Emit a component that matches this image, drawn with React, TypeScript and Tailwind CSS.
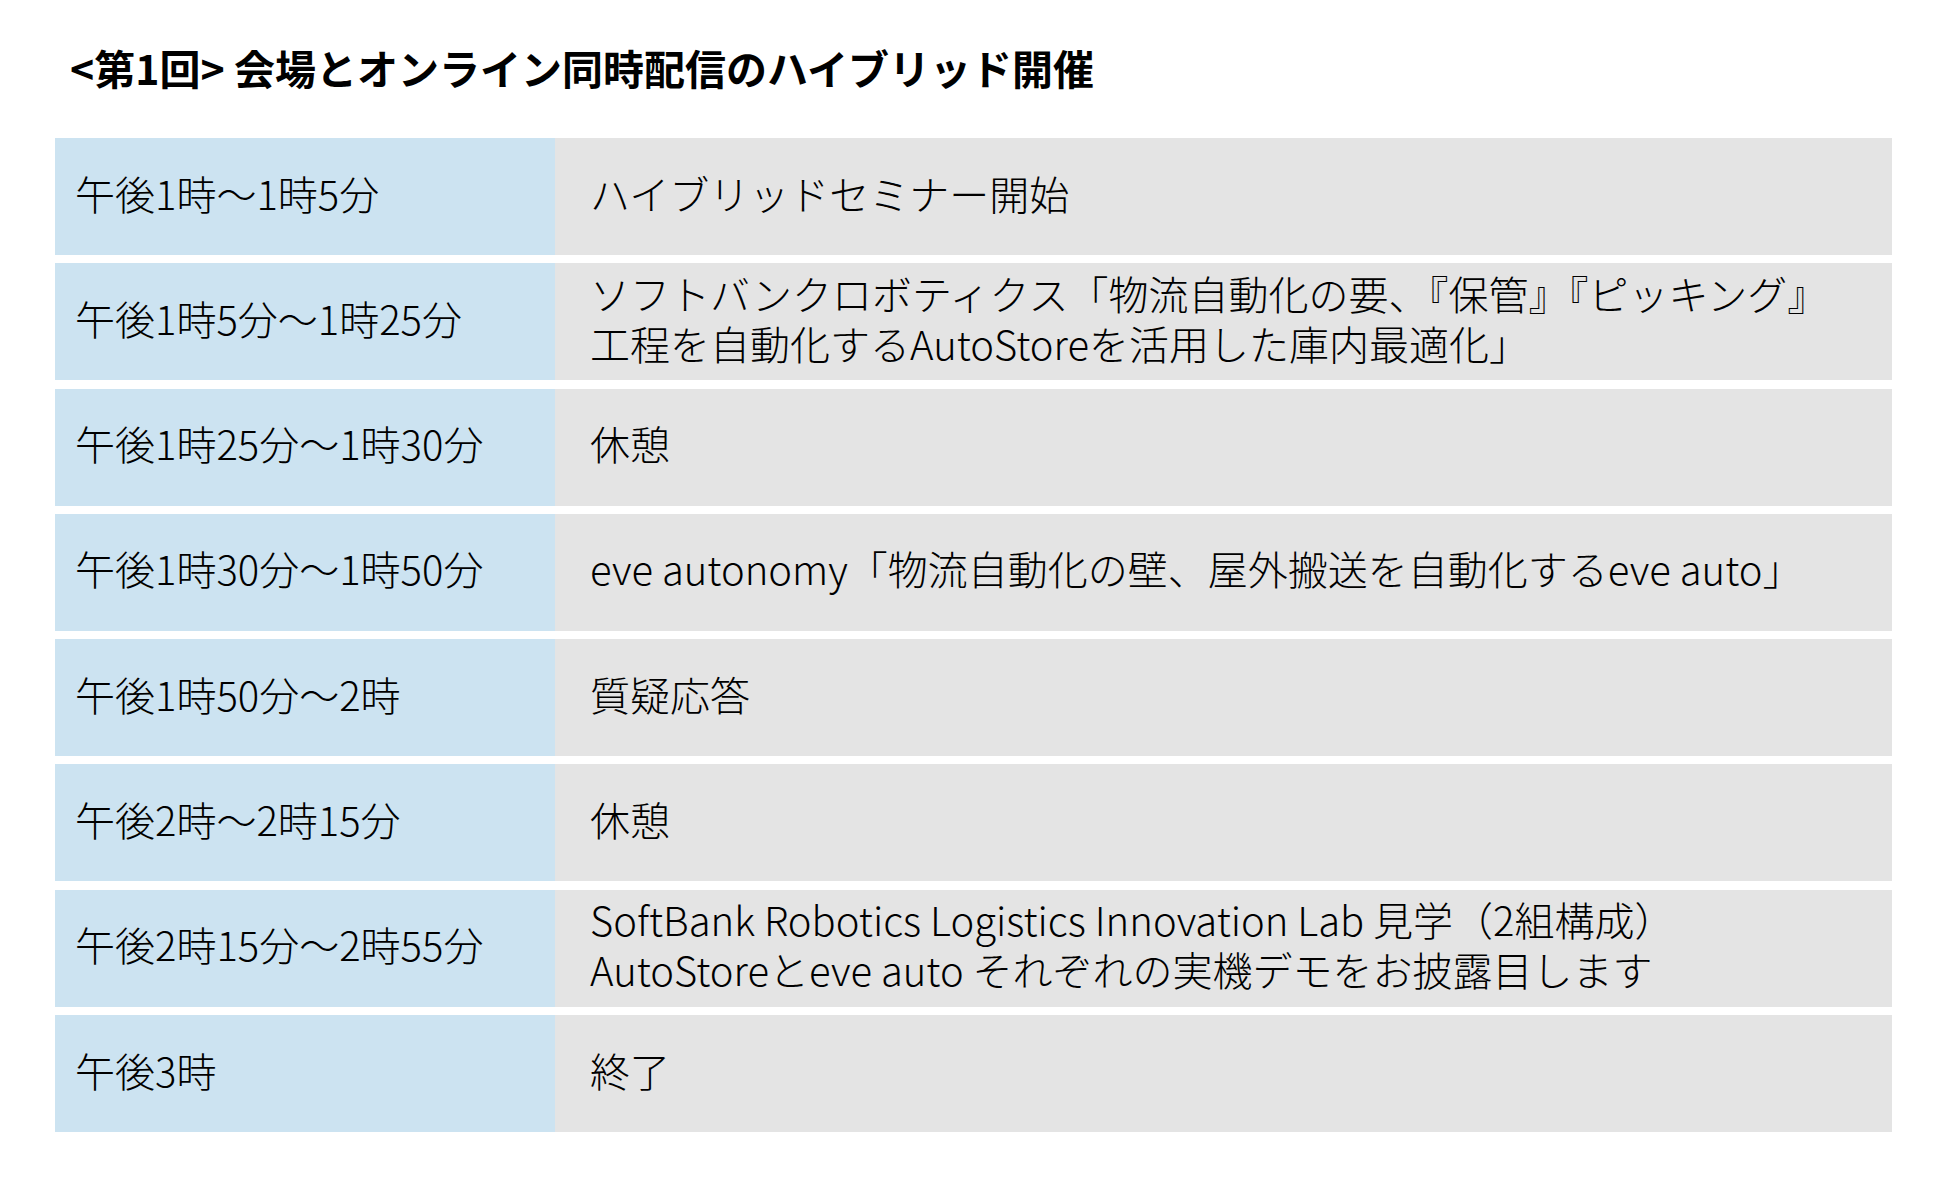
import React from 'react'

const rows: { time: string; lines: string[] }[] = [
  { time: '午後1時〜1時5分', lines: ['ハイブリッドセミナー開始'] },
  {
    time: '午後1時5分〜1時25分',
    lines: [
      'ソフトバンクロボティクス「物流自動化の要、『保管』『ピッキング』',
      '工程を自動化するAutoStoreを活用した庫内最適化」',
    ],
  },
  { time: '午後1時25分〜1時30分', lines: ['休憩'] },
  {
    time: '午後1時30分〜1時50分',
    lines: ['eve autonomy「物流自動化の壁、屋外搬送を自動化するeve auto」'],
  },
  { time: '午後1時50分〜2時', lines: ['質疑応答'] },
  { time: '午後2時〜2時15分', lines: ['休憩'] },
  {
    time: '午後2時15分〜2時55分',
    lines: [
      'SoftBank Robotics Logistics Innovation Lab 見学（2組構成）',
      'AutoStoreとeve auto それぞれの実機デモをお披露目します',
    ],
  },
  { time: '午後3時', lines: ['終了'] },
]

export default function App() {
  return (
    <div
      className="min-h-screen bg-white pl-[55px] pt-[43px] text-black"
      style={{ fontFamily: '"Noto Sans CJK JP", "Noto Sans", sans-serif' }}
    >
      <h1 className="pl-[15px] text-[41px] font-bold leading-[48px]">
        &lt;第1回&gt; 会場とオンライン同時配信のハイブリッド開催
      </h1>

      <div className="mt-[47px] flex w-[1837px] flex-col gap-[8.3px]">
        {rows.map((row) => (
          <div key={row.time} className="flex h-[117px]">
            <div className="flex w-[500px] items-center bg-[#cce3f1] pb-[8px] pl-[20px] text-[40px] font-light leading-[50px] whitespace-nowrap">
              {row.time}
            </div>
            <div className="flex flex-1 flex-col justify-center bg-[#e4e4e4] pb-[8px] pl-[35px] text-[40px] font-light leading-[50px] whitespace-nowrap">
              {row.lines.map((line) => (
                <div key={line}>{line}</div>
              ))}
            </div>
          </div>
        ))}
      </div>
    </div>
  )
}
